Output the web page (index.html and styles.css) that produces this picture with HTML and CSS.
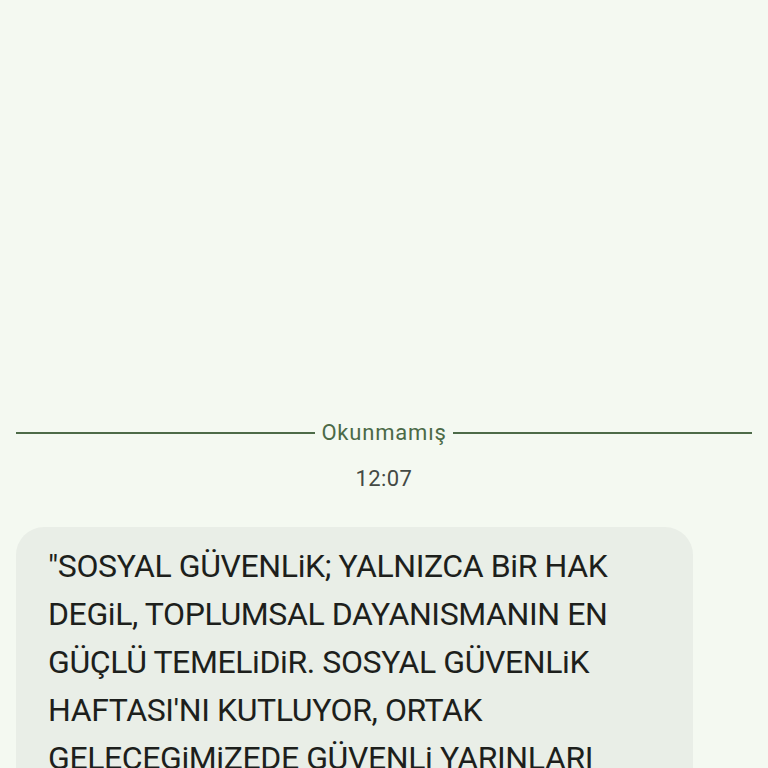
FILE: index.html
```html
<!DOCTYPE html>
<html lang="tr">
<head>
<meta charset="utf-8">
<link rel="stylesheet" href="styles.css">
</head>
<body>
<main class="chat">
  <div class="divider">
    <span class="rule"></span>
    <span class="label">Okunmamış</span>
    <span class="rule"></span>
  </div>
  <div class="time">12:07</div>
  <div class="bubble">
    <p class="msg">"SOSYAL GÜVENLiK; YALNIZCA BiR HAK<br>DEGiL, TOPLUMSAL DAYANISMANIN EN<br>GÜÇLÜ TEMELiDiR. SOSYAL GÜVENLiK<br>HAFTASI'NI KUTLUYOR, ORTAK<br>GELECEGiMiZEDE GÜVENLi YARINLARI<br>DiLERiZ."</p>
  </div>
</main>
</body>
</html>
```
FILE: styles.css
```css
html, body {
  margin: 0;
  padding: 0;
  width: 768px;
  height: 768px;
  overflow: hidden;
  background: #f4f9f1;
  font-family: Roboto, "Noto Sans", sans-serif;
}
.chat {
  display: flex;
  flex-direction: column;
  padding: 421px 16px 0 16px;
}
.divider {
  display: flex;
  align-items: center;
  gap: 6px;
  height: 24px;
}
.rule {
  flex: 1;
  height: 2px;
  background: #4d6b48;
}
.label {
  font-size: 22px;
  letter-spacing: 0.8px;
  color: #4b6a47;
  line-height: 24px;
}
.time {
  margin-top: 22px;
  text-align: center;
  font-size: 22px;
  letter-spacing: 0.4px;
  line-height: 24px;
  color: #444a44;
}
.bubble {
  margin-top: 36px;
  width: 677px;
  box-sizing: border-box;
  background: #e9eee7;
  border-radius: 28px;
  padding: 15px 32px 20px 32px;
}
.msg {
  margin: 0;
  font-size: 32px;
  letter-spacing: -0.4px;
  line-height: 48px;
  color: #1d1f1c;
}
```
